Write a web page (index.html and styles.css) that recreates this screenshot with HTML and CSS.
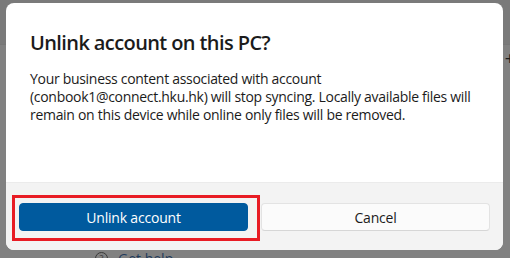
FILE: index.html
```html
<!DOCTYPE html>
<html lang="en">
<head>
    <meta charset="UTF-8">
    <meta name="viewport" content="width=device-width, initial-scale=1.0">
    <title>Unlink account</title>
    <link rel="stylesheet" href="styles.css">
</head>
<body>
    <!-- janela por baixo (escurecida) -->
    <div class="backdrop">
        <div class="top-bar"></div>
        <div class="page">
            <div class="edge-row"><span class="plus">+</span></div>
            <div class="help-row">
                <span class="help-icon">?</span>
                <span class="help-link">Get help</span>
            </div>
        </div>
    </div>

    <div class="dialog">
        <div class="dialog-content">
            <h1>Unlink account on this PC?</h1>
            <p>Your business content associated with account (conbook1@connect.hku.hk) will stop syncing. Locally available files will remain on this device while online only files will be removed.</p>
        </div>
        <div class="dialog-footer">
            <button class="btn btn-primary">Unlink account</button>
            <button class="btn">Cancel</button>
        </div>
        <div class="highlight"></div>
    </div>
</body>
</html>
```

FILE: styles.css
```css
body {
    margin: 0;
    font-family: "Open Sans", Arial, sans-serif;
    color: #1b1b1b;
    overflow: hidden;
}
.backdrop {
    width: 510px;
    height: 258px;
    background-color: #7f7f7f;
    display: flex;
    flex-direction: column;
}
.top-bar {
    height: 44px;
    background-color: #7a7a7a;
    border-bottom: 1px solid #777;
}
.page {
    flex: 1;
    display: flex;
    flex-direction: column;
    justify-content: space-between;
    background-color: #818181;
}
.edge-row {
    display: flex;
    justify-content: flex-end;
    padding-top: 4px;
}
.plus {
    font-size: 18px;
    line-height: 18px;
    color: #1d1d1d;
    margin-right: -5px;
}
.help-row {
    display: flex;
    align-items: center;
    gap: 10px;
    padding-left: 95px;
    margin-bottom: -9px;
    height: 18px;
}
.help-icon {
    width: 11px;
    height: 11px;
    border: 1px solid #3a3a3a;
    border-radius: 50%;
    font-size: 9px;
    line-height: 11px;
    text-align: center;
    color: #3a3a3a;
}
.help-link {
    font-size: 14px;
    color: #1f3b5c;
}

/* caixa de diálogo */
.dialog {
    position: absolute;
    left: 6px;
    top: 3px;
    width: 497px;
    height: 247px;
    background-color: #fff;
    border-radius: 8px;
    overflow: hidden;
    display: flex;
    flex-direction: column;
}
.dialog-content {
    height: 179px;
    padding: 0 24px;
    box-sizing: border-box;
}
h1 {
    margin: 26px 0 0;
    font-size: 20px;
    font-weight: 600;
    line-height: 28px;
    letter-spacing: -0.6px;
}
.dialog-content p {
    margin: 13px 0 0;
    font-size: 14px;
    line-height: 18px;
    letter-spacing: -0.3px;
}
.dialog-footer {
    flex: 1;
    background-color: #f3f3f3;
    border-top: 1px solid #ebebeb;
    display: flex;
    gap: 13px;
    padding: 20px 13px 0;
}
.btn {
    flex: 1;
    height: 28px;
    font-family: "Open Sans", Arial, sans-serif;
    font-size: 14px;
    color: #1b1b1b;
    background-color: #fbfbfb;
    border: 1px solid #e3e3e3;
    border-bottom-color: #d6d6d6;
    border-radius: 4px;
    letter-spacing: -0.2px;
}
.btn-primary {
    background-color: #005a9e;
    border-color: #005a9e;
    color: #fff;
}
/* marcação vermelha por cima do botão */
.highlight {
    position: absolute;
    left: 6px;
    top: 192px;
    width: 242px;
    height: 40px;
    border: 3px solid #e81c24;
}
```
